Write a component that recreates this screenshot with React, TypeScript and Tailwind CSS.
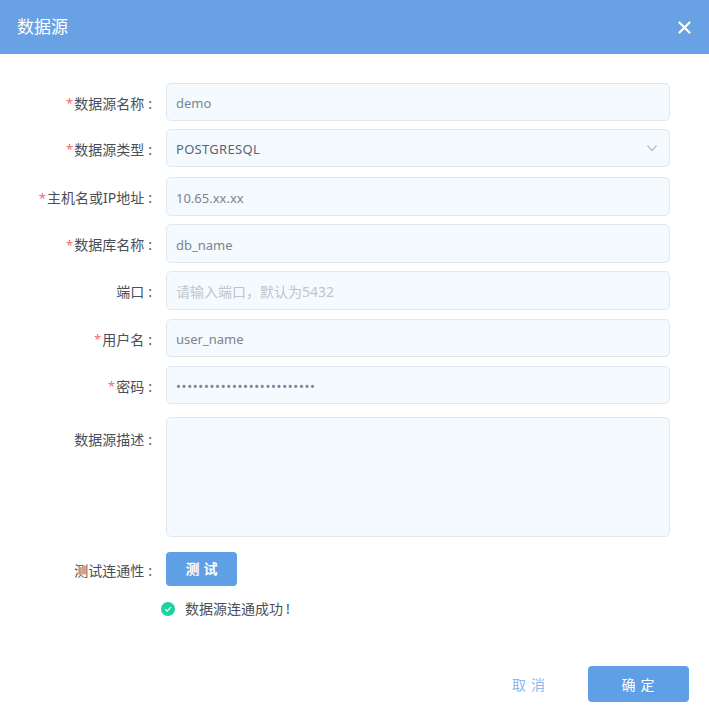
const font = { fontFamily: '"Noto Sans", "Noto Sans CJK SC", sans-serif' }

const fieldBox =
  'w-[504px] rounded-[5px] border border-[#dfe8f2] bg-[#f5faff] px-[9px] text-[13px] outline-none'
const inputText = 'pt-[2px] text-[#7b8491]'

function Label({ text, required, className = '' }: { text: string; required?: boolean; className?: string }) {
  return (
    <div className={`flex w-[153px] shrink-0 items-center justify-end pt-[2px] text-[14px] text-[#4a4f57] ${className}`}>
      {required && <span className="mr-[1px] mt-[1px] text-[13px] leading-none text-[#f56c6c]">*</span>}
      <span>{text}</span>
      <span className="ml-[4px] mr-[1px]">:</span>
    </div>
  )
}

function Row({ label, required, className = '', children }: { label: string; required?: boolean; className?: string; children: React.ReactNode }) {
  return (
    <div className={`flex items-center gap-[13px] ${className}`}>
      <Label text={label} required={required} />
      {children}
    </div>
  )
}

export default function App() {
  return (
    <div style={font} className="flex h-[716px] w-[709px] flex-col overflow-hidden bg-white">
      <header className="flex h-[54px] shrink-0 items-center justify-between bg-[#68a2e5] pl-[17px] pr-[17px]">
        <h1 className="text-[17px] font-normal text-white">数据源</h1>
        <svg width="15" height="15" viewBox="0 0 15 15" fill="none" stroke="white" strokeWidth="2.2" strokeLinecap="round">
          <path d="M2.5 2.5 12.5 12.5M12.5 2.5 2.5 12.5" />
        </svg>
      </header>

      <main className="flex flex-col pt-[29px]">
        <Row label="数据源名称" required>
          <input readOnly value="demo" className={`${fieldBox} ${inputText} h-[38px]`} />
        </Row>
        <Row label="数据源类型" required className="mt-[8px]">
          <div className={`${fieldBox} flex h-[38px] items-center justify-between pr-[11px] pt-[3px] text-[#5c6573]`}>
            <span className="tracking-[0.3px]">POSTGRESQL</span>
            <svg width="12" height="12" viewBox="0 0 12 12" fill="none" stroke="#b4bccc" strokeWidth="1.2" className="-mt-[3px]">
              <path d="M1.5 3.5 6 8.5 10.5 3.5" />
            </svg>
          </div>
        </Row>
        <Row label="主机名或IP地址" required className="mt-[10px]">
          <input readOnly value="10.65.xx.xx" className={`${fieldBox} ${inputText} h-[39px]`} />
        </Row>
        <Row label="数据库名称" required className="mt-[8px]">
          <input readOnly value="db_name" className={`${fieldBox} ${inputText} h-[39px]`} />
        </Row>
        <Row label="端口" className="mt-[8px]">
          <input
            readOnly
            placeholder={'请输入端口\uFF0C默认为5432'}
            className={`${fieldBox} ${inputText} h-[39px] text-[14px] placeholder:text-[#c0c4cc]`}
          />
        </Row>
        <Row label="用户名" required className="mt-[9px]">
          <input readOnly value="user_name" className={`${fieldBox} ${inputText} h-[38px]`} />
        </Row>
        <Row label="密码" required className="mt-[9px]">
          <input readOnly type="password" value="1234567890123456789012345" className={`${fieldBox} ${inputText} h-[38px] tracking-[0.7px]`} />
        </Row>

        <div className="mt-[13px] flex gap-[13px]">
          <Label text="数据源描述" className="h-[42px] items-center" />
          <textarea readOnly className={`${fieldBox} ${inputText} h-[120px] resize-none`} />
        </div>

        <Row label="测试连通性" className="mt-[15px]">
          <button className="flex h-[34px] w-[71px] items-center justify-center rounded-[4px] bg-[#5f9fe6] pb-[1px] pl-[4px] text-[14px] font-bold tracking-[4px] text-white">
            测试
          </button>
        </Row>

        <div className="mt-[13px] flex items-center pl-[161px] text-[14px] text-[#4a4f57]">
          <svg width="14" height="14" viewBox="0 0 14 14" className="mr-[10px]">
            <circle cx="7" cy="7" r="7" fill="#1fd1a1" />
            <path d="M4 7.2 6.1 9.2 10 5.2" fill="none" stroke="white" strokeWidth="1.1" />
          </svg>
          <span className="-mt-[1px]">数据源连通成功</span>
          <span className="-mt-[1px] ml-[3px]">!</span>
        </div>
      </main>

      <footer className="mt-auto flex items-center justify-end pb-[14px] pr-[20px]">
        <button className="mr-[38px] pt-[1px] text-[14px] tracking-[5px] text-[#8bb8ec]">取消</button>
        <button className="flex h-[36px] w-[101px] items-center justify-center rounded-[4px] bg-[#5f9fe6] pl-[4px] pt-[1px] text-[14px] tracking-[5px] text-white">
          确定
        </button>
      </footer>
    </div>
  )
}
